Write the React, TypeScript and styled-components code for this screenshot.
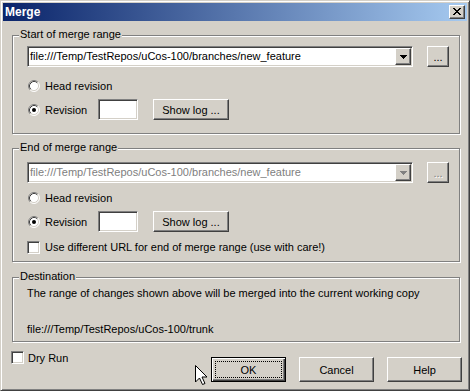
import React from 'react';
import styled, { createGlobalStyle, css } from 'styled-components';

const FACE = '#d4d0c8';

const GlobalStyle = createGlobalStyle`
  html, body { margin: 0; padding: 0; background: ${FACE}; }
  body { font-family: "Liberation Sans", Arial, sans-serif; font-size: 11px; color: #000; }
  * { box-sizing: border-box; }
`;

const raised = css`
  border: 1px solid;
  border-color: #fff #404040 #404040 #fff;
  box-shadow: inset -1px -1px #808080;
  background: ${FACE};
`;

const sunken = css`
  border: 1px solid;
  border-color: #808080 #fff #fff #808080;
  box-shadow: inset 1px 1px #404040, inset -1px -1px ${FACE};
  background: #fff;
`;

const Window = styled.div`
  position: relative;
  width: 470px;
  height: 391px;
  background: ${FACE};
  border: 1px solid;
  border-color: ${FACE} #404040 #404040 ${FACE};
  box-shadow: inset 1px 1px #fff, inset -1px -1px #808080;
  padding: 2px;
  display: flex;
  flex-direction: column;
`;

const TitleBar = styled.div`
  height: 18px;
  background: linear-gradient(to right, #0a246a, #a6caf0);
  display: flex;
  align-items: center;
  justify-content: space-between;
  padding: 0 2px 0 2px;
`;

const TitleText = styled.span`
  color: #fff;
  font-weight: bold;
  font-size: 12px;
  line-height: 18px;
`;

const CloseButton = styled.div`
  ${raised};
  width: 16px;
  height: 14px;
  display: flex;
  align-items: center;
  justify-content: center;
  padding-bottom: 1px;
`;

const Client = styled.div`
  flex: 1;
  display: flex;
  flex-direction: column;
  padding-top: 14px;
`;

const Group = styled.div<{ $h: number; $mt?: number; $pt: number }>`
  position: relative;
  height: ${(p) => p.$h}px;
  margin: ${(p) => p.$mt ?? 0}px 7px 0 9px;
  border: 1px solid #808080;
  box-shadow: inset 1px 1px #fff, 1px 1px #fff;
  padding: ${(p) => p.$pt}px 10px 0 14px;
  display: flex;
  flex-direction: column;
`;

const GroupLabel = styled.span`
  position: absolute;
  top: -8px;
  left: 6px;
  padding: 0 1px;
  line-height: 13px;
  background: ${FACE};
`;

const Row = styled.div<{ $h: number; $mt?: number }>`
  display: flex;
  align-items: center;
  height: ${(p) => p.$h}px;
  margin-top: ${(p) => p.$mt ?? 0}px;
`;

const ComboRow = styled.div`
  display: flex;
  align-items: flex-start;
  gap: 14px;
`;

const Combo = styled.div<{ $disabled?: boolean }>`
  ${sunken};
  flex: 1;
  height: 21px;
  padding: 1px;
  display: flex;
  align-items: center;
  color: ${(p) => (p.$disabled ? '#808080' : '#000')};
`;

const ComboText = styled.span`
  flex: 1;
  padding-left: 1px;
  line-height: 17px;
  white-space: nowrap;
  overflow: hidden;
`;

const DropButton = styled.div`
  ${raised};
  width: 16px;
  height: 17px;
  display: flex;
  align-items: center;
  justify-content: center;
`;

const Button = styled.div<{ $w: number; $h: number; $disabled?: boolean }>`
  ${raised};
  width: ${(p) => p.$w}px;
  height: ${(p) => p.$h}px;
  display: flex;
  align-items: center;
  justify-content: center;
  color: ${(p) => (p.$disabled ? '#808080' : '#000')};
  text-shadow: ${(p) => (p.$disabled ? '1px 1px #fff' : 'none')};
  flex-shrink: 0;
`;

const DefaultButton = styled(Button)`
  position: relative;
  border: 1px solid #000;
  box-shadow: inset 1px 1px #fff, inset -1px -1px #404040, inset -2px -2px #808080;
  &::after {
    content: '';
    position: absolute;
    inset: 3px;
    border: 1px dotted #000;
  }
`;

const Choice = styled.div<{ $w?: number }>`
  display: flex;
  align-items: center;
  gap: 5px;
  width: ${(p) => (p.$w ? `${p.$w}px` : 'auto')};
  flex-shrink: 0;
`;

const RadioBox = styled.span`
  width: 12px;
  height: 12px;
  margin-left: 1px;
  display: block;
  svg { display: block; }
`;

const CheckBox = styled.span`
  ${sunken};
  width: 13px;
  height: 13px;
  display: block;
  flex-shrink: 0;
`;

const RevInput = styled.div`
  ${sunken};
  width: 40px;
  height: 21px;
  margin-right: 15px;
`;

const InfoText = styled.div`
  line-height: 14px;
  white-space: nowrap;
`;

const Footer = styled.div`
  display: flex;
  align-items: flex-start;
  justify-content: space-between;
  margin-top: 9px;
  padding: 0 5px 0 8px;
`;

const DryRun = styled.div`
  display: flex;
  align-items: center;
  gap: 4px;
  height: 13px;
`;

const ButtonBar = styled.div`
  display: flex;
  gap: 13px;
  margin-top: 6px;
`;

const Cursor = styled.svg`
  position: absolute;
  left: 194px;
  top: 364px;
`;

const Radio: React.FC<{ checked?: boolean }> = ({ checked }) => (
  <RadioBox>
    <svg width="12" height="12" viewBox="0 0 12 12">
      <circle cx="6" cy="6" r="5" fill="#fff" />
      <path d="M2.11 9.89 A5.5 5.5 0 0 1 9.89 2.11" fill="none" stroke="#808080" strokeWidth="1" />
      <path d="M9.89 2.11 A5.5 5.5 0 0 1 2.11 9.89" fill="none" stroke="#fff" strokeWidth="1" />
      <path d="M2.82 9.18 A4.5 4.5 0 0 1 9.18 2.82" fill="none" stroke="#404040" strokeWidth="1" />
      <path d="M9.18 2.82 A4.5 4.5 0 0 1 2.82 9.18" fill="none" stroke={FACE} strokeWidth="1" />
      {checked && <circle cx="6" cy="6" r="2" fill="#000" />}
    </svg>
  </RadioBox>
);

const Arrow: React.FC<{ color: string }> = ({ color }) => (
  <svg width="7" height="4" viewBox="0 0 7 4" shapeRendering="crispEdges">
    <rect x="0" y="0" width="7" height="1" fill={color} />
    <rect x="1" y="1" width="5" height="1" fill={color} />
    <rect x="2" y="2" width="3" height="1" fill={color} />
    <rect x="3" y="3" width="1" height="1" fill={color} />
  </svg>
);

const CloseGlyph = () => {
  const rows = ['XX....XX', '.XX..XX.', '..XXXX..', '...XX...', '..XXXX..', '.XX..XX.', 'XX....XX'];
  return (
    <svg width="8" height="7" viewBox="0 0 8 7" shapeRendering="crispEdges">
      {rows.flatMap((r, y) =>
        r.split('').map((c, x) => (c === 'X' ? <rect key={`${x}-${y}`} x={x} y={y} width="1" height="1" fill="#000" /> : null))
      )}
    </svg>
  );
};

const URL = 'file:///Temp/TestRepos/uCos-100/branches/new_feature';

export default function App() {
  return (
    <>
      <GlobalStyle />
      <Window>
        <TitleBar>
          <TitleText>Merge</TitleText>
          <CloseButton>
            <CloseGlyph />
          </CloseButton>
        </TitleBar>
        <Client>
          <Group $h={99} $pt={10}>
            <GroupLabel>Start of merge range</GroupLabel>
            <ComboRow>
              <Combo>
                <ComboText>{URL}</ComboText>
                <DropButton>
                  <Arrow color="#000" />
                </DropButton>
              </Combo>
              <Button $w={22} $h={21}>...</Button>
            </ComboRow>
            <Row $h={16} $mt={11}>
              <Choice>
                <Radio />
                <span>Head revision</span>
              </Choice>
            </Row>
            <Row $h={21} $mt={5}>
              <Choice $w={71}>
                <Radio checked />
                <span>Revision</span>
              </Choice>
              <RevInput />
              <Button $w={76} $h={21}>Show log ...</Button>
            </Row>
          </Group>

          <Group $h={114} $mt={14} $pt={13}>
            <GroupLabel>End of merge range</GroupLabel>
            <ComboRow>
              <Combo $disabled>
                <ComboText>{URL}</ComboText>
                <DropButton>
                  <Arrow color="#808080" />
                </DropButton>
              </Combo>
              <Button $w={22} $h={21} $disabled>...</Button>
            </ComboRow>
            <Row $h={16} $mt={7}>
              <Choice>
                <Radio />
                <span>Head revision</span>
              </Choice>
            </Row>
            <Row $h={21} $mt={5}>
              <Choice $w={71}>
                <Radio checked />
                <span>Revision</span>
              </Choice>
              <RevInput />
              <Button $w={76} $h={21}>Show log ...</Button>
            </Row>
            <Row $h={16} $mt={7}>
              <Choice>
                <CheckBox />
                <span>Use different URL for end of merge range (use with care!)</span>
              </Choice>
            </Row>
          </Group>

          <Group $h={65} $mt={15} $pt={8}>
            <GroupLabel>Destination</GroupLabel>
            <InfoText>The range of changes shown above will be merged into the current working copy</InfoText>
            <Row $h={14} $mt={22}>
              <InfoText>file:///Temp/TestRepos/uCos-100/trunk</InfoText>
            </Row>
          </Group>

          <Footer>
            <DryRun>
              <CheckBox />
              <span>Dry Run</span>
            </DryRun>
            <ButtonBar>
              <DefaultButton $w={75} $h={25}>OK</DefaultButton>
              <Button $w={75} $h={25}>Cancel</Button>
              <Button $w={75} $h={25}>Help</Button>
            </ButtonBar>
          </Footer>
        </Client>
        <Cursor width="13" height="21" viewBox="0 0 13 21">
          <polygon
            points="0.5,0.5 0.5,17 4.5,13 7.5,19.5 10,18.5 7,12 12,12"
            fill="#fff"
            stroke="#000"
            strokeWidth="1"
            strokeLinejoin="miter"
          />
        </Cursor>
      </Window>
    </>
  );
}
